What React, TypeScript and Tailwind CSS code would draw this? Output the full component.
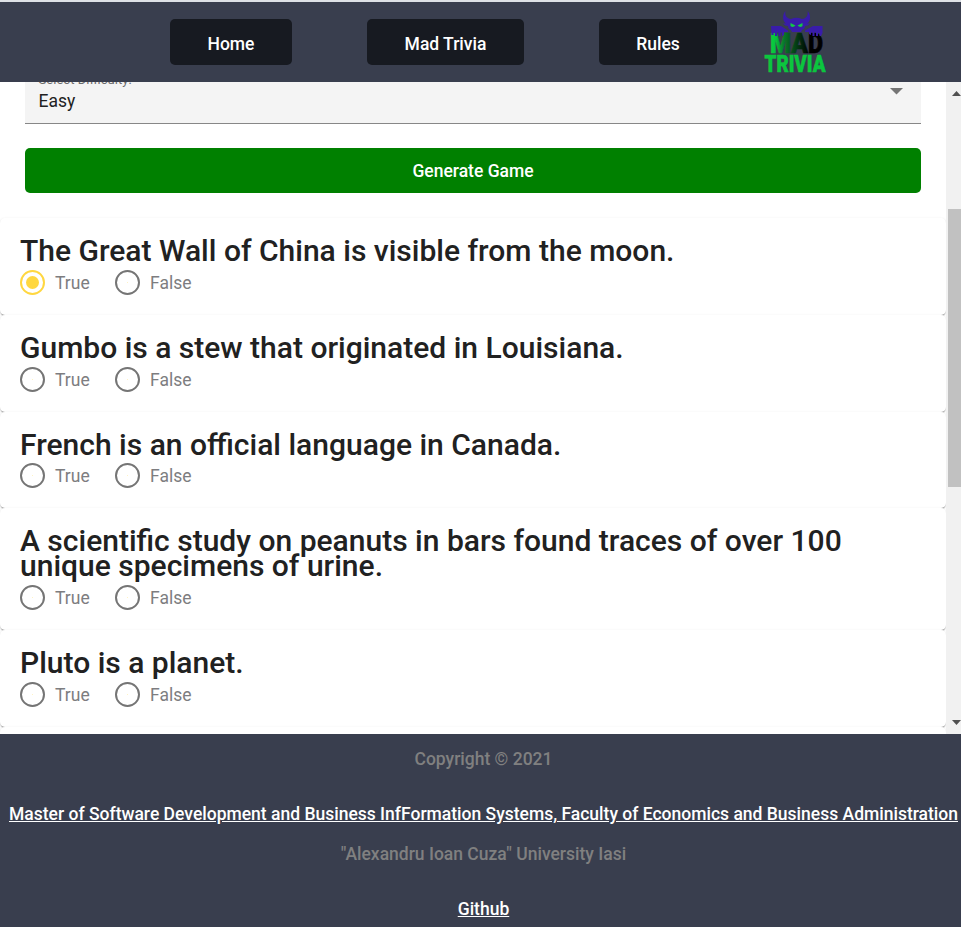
import type { ReactNode } from "react";

const questions = [
  { lines: ["The Great Wall of China is visible from the moon."], answer: true, h: "h-[97px]" },
  { lines: ["Gumbo is a stew that originated in Louisiana."], h: "h-[97px]" },
  { lines: ["French is an official language in Canada."], h: "h-[96px]" },
  { lines: ["A scientific study on peanuts in bars found traces of over 100", "unique specimens of urine."], h: "h-[122px]" },
  { lines: ["Pluto is a planet."], h: "h-[97px]" },
];

function NavButton({ width, children }: { width: string; children: ReactNode }) {
  return (
    <button className={`h-[46px] rounded-[5px] bg-[#171a21] pt-[5px] text-[17.5px] font-medium text-white ${width}`}>{children}</button>
  );
}

function Logo() {
  return (
    <svg width="66" height="68" viewBox="0 0 66 68" aria-label="Mad Trivia">
      <defs>
        <linearGradient id="mad" x1="9" x2="60" y1="0" y2="0" gradientUnits="userSpaceOnUse">
          <stop offset="0" stopColor="#08cf40" />
          <stop offset="0.1" stopColor="#08c03c" />
          <stop offset="0.25" stopColor="#087a29" />
          <stop offset="0.5" stopColor="#043c14" />
          <stop offset="0.75" stopColor="#000" />
        </linearGradient>
      </defs>
      <g fontFamily="Roboto, sans-serif" fontWeight="900">
        <g fontSize="28.5" fill="url(#mad)" stroke="url(#mad)" strokeWidth="0.6">
          <text x="8" y="44.5" textLength="21" lengthAdjust="spacingAndGlyphs">M</text>
          <text x="29" y="44.5" textLength="17" lengthAdjust="spacingAndGlyphs">A</text>
          <text x="46" y="44.5" textLength="15" lengthAdjust="spacingAndGlyphs">D</text>
        </g>
        <text x="2.5" y="63.5" fontSize="24.5" textLength="61" lengthAdjust="spacingAndGlyphs" fill="#0bc63e" stroke="#0bc63e" strokeWidth="0.6">TRIVIA</text>
      </g>
      <path fill="#391caa" d="M23.5 3C20 7 20.5 13 24 15.5L21 15.5Q23 18 26 18Q26 21 29 22L30 24H39L40 22Q43 21 43 18Q46 18 48 15.5L45 15.5C49 13 49 7 45.5 3C46.500 8 44 10.500 40 11Q34.500 8.500 29 11C25 10.500 22.500 8 23.500 3Z" />
      <path fill="#391caa" d="M9 18H19L26 22.500V24H22V27L20 28V24.500H18.500V28H16.500V24.500H15V28H13V25H11.500V27H9.500ZM60.500 18H51L43 22.500V24H47V26L49 27V24.500H50.500V28H52.500V24.500H54V28H56V25H57.500V28H59L60.500 25Z" />
      <path fill="#12c848" d="M28.500 15L33.500 17.500Q31 20 28.500 18ZM40.500 15L35.500 17.500Q38 20 40.500 18Z" />
    </svg>
  );
}

function Radio({ label, checked = false }: { label: string; checked?: boolean }) {
  return (
    <label className="flex h-[25px] items-center gap-[10px]">
      <span className={`flex size-[25px] shrink-0 items-center justify-center rounded-full border-2 ${checked ? "border-[#ffd740]" : "border-[#757575]"}`}>
        <span className={`rounded-full bg-[#ffd740] ${checked ? "size-[13px]" : "size-px opacity-40"}`} />
      </span>
      <span className="w-[35px] pt-px text-[17.5px] leading-[26px] text-[#7d7d80]">{label}</span>
    </label>
  );
}

const cardShadow = "shadow-[0_2px_1px_-1px_rgba(0,0,0,0.2),0_1px_1px_0_rgba(0,0,0,0.14),0_1px_3px_0_rgba(0,0,0,0.12)]";

export default function App() {
  return (
    <div className="flex h-[927px] w-[961px] flex-col overflow-hidden bg-[#393e4e] font-[Roboto,sans-serif]">
      <header className="flex h-[82px] shrink-0 items-start border-t-2 border-[#dee1e6] pl-[170px]">
        <nav className="flex gap-[75px] pt-[17px]">
          <NavButton width="w-[122px]">Home</NavButton>
          <NavButton width="w-[157px]">Mad Trivia</NavButton>
          <NavButton width="w-[118px]">Rules</NavButton>
        </nav>
        <div className="ml-[45px] mt-[6px]"><Logo /></div>
      </header>

      <div className="flex h-[652px] shrink-0 overflow-hidden bg-white">
        <main className="h-[652px] w-[946px] overflow-hidden">
          <div className="mx-[25px] flex h-[42px] w-[896px] justify-between overflow-hidden border-b border-[#878787] bg-[#f4f4f4] pl-[13.5px] pr-[18px]">
            <div className="-mt-[10px]">
              <div className="h-[16px] text-[13.1px] leading-[16px] text-[#6b6b6b]">Select Difficulty:</div>
              <div className="mt-[2px] text-[17.5px] leading-[22px] text-[#212121]">Easy</div>
            </div>
            <svg className="mt-[6px]" width="13" height="7" viewBox="0 0 13 7"><path d="M0 0H13L6.5 6.5Z" fill="#757575" /></svg>
          </div>
          <button className="mx-[25px] mt-[24px] block h-[45px] w-[896px] rounded-[5px] bg-[#008000] pt-[2px] text-[17.5px] font-medium text-white">Generate Game</button>
          <div className="mt-[25px]">
            {questions.map((q) => (
              <section key={q.lines[0]} className={`flex flex-col justify-between rounded-[5px] bg-white p-5 ${cardShadow} ${q.h}`}>
                <h2 className="whitespace-nowrap text-[30.03px] font-medium leading-[25px] text-[#212121]">
                  {q.lines.map((l) => <span key={l} className="block">{l}</span>)}
                </h2>
                <div className="flex gap-[25px]">
                  <Radio label="True" checked={q.answer} />
                  <Radio label="False" />
                </div>
              </section>
            ))}
            <section className={`h-[97px] rounded-[5px] bg-white ${cardShadow}`} />
          </div>
        </main>
        <div className="flex w-[15px] flex-col items-end bg-[#f1f1f1]">
          <svg className="mt-[9px]" width="9" height="5" viewBox="0 0 9 5"><path d="M0 5L4.5 0L9 5Z" fill="#505050" /></svg>
          <div className="mt-[113px] h-[278px] w-[13px] bg-[#c1c1c1]" />
          <svg className="mt-[233px]" width="9" height="5" viewBox="0 0 9 5"><path d="M0 0L4.5 5L9 0Z" fill="#505050" /></svg>
        </div>
      </div>

      <footer className="flex flex-col items-center whitespace-nowrap pl-[6px] pt-[13px] text-[17.5px] font-medium leading-[25px] text-[#808080]">
        <p>Copyright © 2021</p>
        <a className="mt-[30px] text-white underline">Master of Software Development and Business InfFormation Systems, Faculty of Economics and Business Administration</a>
        <p className="mt-[15px]">"Alexandru Ioan Cuza" University Iasi</p>
        <a className="mt-[30px] text-white underline">Github</a>
      </footer>
    </div>
  );
}
